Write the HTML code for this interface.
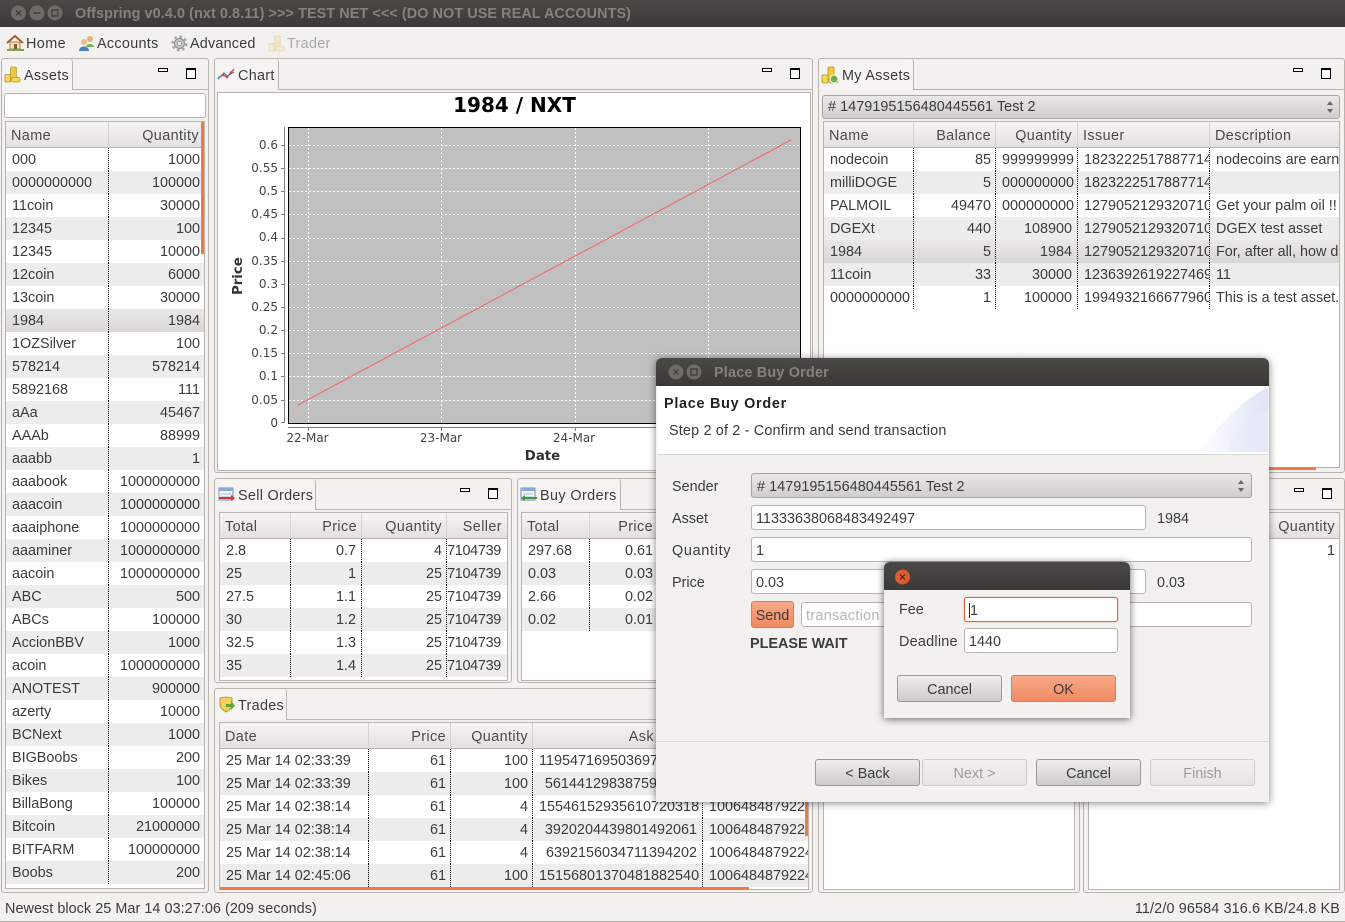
<!DOCTYPE html>
<html><head><meta charset="utf-8"><title>Offspring</title>
<style>
html,body{margin:0;padding:0}
body{position:relative;width:1345px;height:922px;overflow:hidden;background:#f2f1f0;font:14.4px "Liberation Sans",sans-serif;color:#3c3c3c}
div,span{box-sizing:border-box}
.a{position:absolute;white-space:nowrap}
.p{position:absolute;border:1px solid #b9b5ae;border-radius:3px;background:#f2f1f0}
.l{position:absolute;height:1px;background:#b9b5ae}
.tab{position:absolute;background:#f5f4f3;border-right:1px solid #b9b5ae;border-radius:3px 3px 0 0;height:31px;top:0}
.mn{position:absolute;width:10px;height:4px;border:1px solid #000;background:#fff}
.mx{position:absolute;width:10px;height:11px;border:1px solid #000;border-top-width:2px;background:#fff}
.f{position:absolute;border:1px solid #b9b5ae;background:#fff;overflow:hidden}
table{border-collapse:separate;border-spacing:0;table-layout:fixed;position:absolute;left:0;top:0;background:#fff}
th{box-sizing:border-box;height:26px;padding:2px 4px 0 5px;font-weight:normal;text-align:left;background:linear-gradient(#f6f5f4,#e3e1de);border-bottom:1px solid #b9b5ae;border-right:1px solid #d6d3ce;overflow:hidden;white-space:nowrap;color:#4a4a4a;letter-spacing:.4px}
td{height:23px;padding:0 4px 0 6px;overflow:hidden;white-space:nowrap;border-right:1px dotted #000}
td:last-child,th:last-child{border-right:none}
tr:nth-child(even) td{background:#ededed}
tr:nth-child(odd) td{background:#fff}
tr.s td{background:linear-gradient(#e9e8e6,#d9d8d5)}
tr td{line-height:22px}
tr th{line-height:22px}
.o{position:absolute;background:#f0794a}
.inp{position:absolute;background:#fff;border:1px solid #b9b5ae;border-radius:3px;height:25px;line-height:26px;padding-left:4px;white-space:nowrap;overflow:hidden}
.combo{position:absolute;border:1px solid #a9a69f;border-radius:3px;background:linear-gradient(#e9e8e6,#cfcecb);height:25px;line-height:26px;padding-left:5px;white-space:nowrap;letter-spacing:.05px}
.btn{position:absolute;border:1px solid #9c9992;border-radius:3px;background:linear-gradient(#eeedeb,#cdccc9);height:27px;width:105px;line-height:28px;text-align:center}
.dis{border-color:#cfccc6;background:linear-gradient(#f2f1f0,#e6e5e3);color:#9c9c9c}
.org{border-color:#c9835f;background:linear-gradient(#f9a888,#ef8a62)}
#as th:nth-child(2),#as td:nth-child(2){text-align:right}
#as th:nth-child(2){padding-right:5px}
#my th:nth-child(2),#my td:nth-child(2),#my th:nth-child(3),#my td:nth-child(3){text-align:right}
#my td:nth-child(3),#my th:nth-child(3){padding-right:5px}
#se th,#se td,#bu th,#bu td,#tr th,#tr td{text-align:right}
#se th:first-child,#se td:first-child,#bu th:first-child,#bu td:first-child,#tr th:first-child,#tr td:first-child,#tr td:last-child,#tr th:last-child{text-align:left}
#se td:last-child{padding-left:0;padding-right:6px;letter-spacing:-.3px}
#se th:last-child{padding-right:5px}
#se td:nth-child(2){padding-right:5px}
#tr td:nth-child(4){padding-right:5px}
#tr th:nth-child(4){padding-right:48px}
svg text{font-family:"DejaVu Sans",sans-serif}
</style></head><body>

<svg width="0" height="0" style="position:absolute"><defs>
<symbol id="coins" viewBox="0 0 18 18"><rect x="7" y="1" width="6" height="13" rx="1" fill="#f0c93c" stroke="#b8901c" stroke-width=".8"/><rect x="1" y="9" width="6" height="8" rx="1" fill="#f5d860" stroke="#b8901c" stroke-width=".8"/><rect x="8" y="12" width="9" height="5" rx="2" fill="#f5d860" stroke="#b8901c" stroke-width=".8"/></symbol>
<symbol id="tbl" viewBox="0 0 18 16"><rect x="1" y="1" width="14" height="12" fill="#f4f6fb" stroke="#6f8fc0"/><rect x="1" y="1" width="14" height="3" fill="#8aa8d8"/><path d="M3 7h10M3 10h10" stroke="#a9b9d6"/></symbol>
</defs></svg>

<!-- title bar -->
<div class="a" style="left:0;top:0;width:1345px;height:27px;background:linear-gradient(#4a4945,#3a3935)"></div>
<svg class="a" style="left:0;top:0" width="70" height="27"><circle cx="18.500" cy="13" r="7.500" fill="#6e6c67"/><circle cx="37" cy="13" r="7.500" fill="#6e6c67"/><circle cx="55" cy="13" r="7.500" fill="#6e6c67"/><path d="M16 10.500l5 5m0-5l-5 5" stroke="#3a3935" stroke-width="1.200"/><path d="M33.500 13h7" stroke="#3a3935" stroke-width="1.400"/><rect x="52" y="10" width="6" height="6" fill="none" stroke="#3a3935" stroke-width="1.200"/></svg>
<div class="a" style="left:75px;top:6px;font-weight:bold;font-size:14.4px;line-height:16px;color:#85827a;letter-spacing:.08px">Offspring v0.4.0 (nxt 0.8.11) &gt;&gt;&gt; TEST NET &lt;&lt;&lt; (DO NOT USE REAL ACCOUNTS)</div>

<!-- toolbar -->
<svg class="a" style="left:6px;top:34px" width="19" height="18" viewBox="0 0 19 18"><path d="M1 9L9 2l8 7" fill="none" stroke="#a5622a" stroke-width="2"/><rect x="4" y="8" width="10" height="7" fill="#f2e2c0" stroke="#a5622a" stroke-width=".8"/><rect x="8" y="10" width="3" height="5" fill="#8a5a2a"/><rect x="1" y="15" width="17" height="2" fill="#6fae4a"/></svg>
<div class="a" style="left:26px;top:36px;line-height:16px;letter-spacing:.4px">Home</div>
<svg class="a" style="left:78px;top:34px" width="18" height="18" viewBox="0 0 18 18"><circle cx="12" cy="5" r="3" fill="#e8b27a"/><path d="M8 13c0-4 8-4 8 0z" fill="#7db356"/><circle cx="6" cy="8" r="3" fill="#eebb88"/><path d="M1 17c0-6 10-6 10 0z" fill="#4d80c4"/></svg>
<div class="a" style="left:97px;top:36px;line-height:16px;letter-spacing:.3px">Accounts</div>
<svg class="a" style="left:171px;top:35px" width="17" height="17" viewBox="0 0 17 17"><circle cx="8.500" cy="8.500" r="5" fill="#c8c8c4" stroke="#8f8f8a"/><circle cx="8.500" cy="8.500" r="6.800" fill="none" stroke="#a5a5a0" stroke-width="2.500" stroke-dasharray="2.500 2.800"/><circle cx="8.500" cy="8.500" r="2.200" fill="#f2f1f0" stroke="#8f8f8a"/></svg>
<div class="a" style="left:190px;top:36px;line-height:16px;letter-spacing:.2px">Advanced</div>
<svg class="a" style="left:268px;top:35px;opacity:.25" width="17" height="17"><use href="#coins"/></svg>
<div class="a" style="left:287px;top:36px;line-height:16px;color:#a9a9a7;letter-spacing:.3px">Trader</div>

<!-- Assets panel -->
<div class="p" style="left:1px;top:58px;width:208px;height:835px"></div>
<div class="l" style="left:2px;top:89px;width:206px"></div>
<div class="tab" style="left:2px;top:59px;width:71px"></div>
<svg class="a" style="left:4px;top:66px" width="17" height="17"><use href="#coins"/></svg>
<div class="a" style="left:24px;top:68px;line-height:16px;letter-spacing:.3px">Assets</div>
<div class="mn" style="left:158px;top:68px"></div><div class="mx" style="left:186px;top:68px"></div>
<div class="inp" style="left:4px;top:93px;width:202px;height:25px"></div>
<div class="f" style="left:5px;top:121px;width:200px;height:768px">
<table id="as" style="width:198px"><col style="width:103px"><col style="width:95px">
<thead><tr><th>Name</th><th>Quantity</th></tr></thead><tbody>
<tr><td>000</td><td>1000</td></tr>
<tr><td>0000000000</td><td>100000</td></tr>
<tr><td>11coin</td><td>30000</td></tr>
<tr><td>12345</td><td>100</td></tr>
<tr><td>12345</td><td>10000</td></tr>
<tr><td>12coin</td><td>6000</td></tr>
<tr><td>13coin</td><td>30000</td></tr>
<tr class="s"><td>1984</td><td>1984</td></tr>
<tr><td>1OZSilver</td><td>100</td></tr>
<tr><td>578214</td><td>578214</td></tr>
<tr><td>5892168</td><td>111</td></tr>
<tr><td>aAa</td><td>45467</td></tr>
<tr><td>AAAb</td><td>88999</td></tr>
<tr><td>aaabb</td><td>1</td></tr>
<tr><td>aaabook</td><td>1000000000</td></tr>
<tr><td>aaacoin</td><td>1000000000</td></tr>
<tr><td>aaaiphone</td><td>1000000000</td></tr>
<tr><td>aaaminer</td><td>1000000000</td></tr>
<tr><td>aacoin</td><td>1000000000</td></tr>
<tr><td>ABC</td><td>500</td></tr>
<tr><td>ABCs</td><td>100000</td></tr>
<tr><td>AccionBBV</td><td>1000</td></tr>
<tr><td>acoin</td><td>1000000000</td></tr>
<tr><td>ANOTEST</td><td>900000</td></tr>
<tr><td>azerty</td><td>10000</td></tr>
<tr><td>BCNext</td><td>1000</td></tr>
<tr><td>BIGBoobs</td><td>200</td></tr>
<tr><td>Bikes</td><td>100</td></tr>
<tr><td>BillaBong</td><td>100000</td></tr>
<tr><td>Bitcoin</td><td>21000000</td></tr>
<tr><td>BITFARM</td><td>100000000</td></tr>
<tr><td>Boobs</td><td>200</td></tr>
</tbody></table></div>
<div class="o" style="left:201px;top:122px;width:3px;height:132px"></div>

<!-- Chart panel -->
<div class="p" style="left:214px;top:58px;width:599px;height:415px"></div>
<div class="l" style="left:215px;top:89px;width:597px"></div>
<div class="tab" style="left:215px;top:59px;width:64px"></div>
<svg class="a" style="left:217px;top:66px" width="18" height="16" viewBox="0 0 18 16"><path d="M1 12l5-3 4 2 7-8" fill="none" stroke="#d84444" stroke-width="1.300"/><path d="M1 13l6-6 3 3 7-4" fill="none" stroke="#4a78c0" stroke-width="1.200"/><circle cx="6" cy="9" r="1.300" fill="#d84444"/><circle cx="10" cy="11" r="1.300" fill="#d84444"/><circle cx="14" cy="6.500" r="1.300" fill="#d84444"/></svg>
<div class="a" style="left:238px;top:68px;line-height:16px;letter-spacing:.3px">Chart</div>
<div class="mn" style="left:762px;top:68px"></div><div class="mx" style="left:790px;top:68px"></div>
<div class="f" style="left:217px;top:92px;width:594px;height:379px"></div>
<svg class="a" style="left:0;top:0" width="1345" height="922">
<rect x="288.500" y="127.500" width="512" height="296" fill="#c0c0c0" stroke="#000"/>
<path d="M289 400.500H800M289 376.500H800M289 353.500H800M289 330.500H800M289 307.500H800M289 284.500H800M289 261.500H800M289 238.500H800M289 214.500H800M289 191.500H800M289 168.500H800M289 145.500H800M308.500 128V423M441.500 128V423M575.500 128V423M708.500 128V423" stroke="#fff" stroke-dasharray="2 2" fill="none"/>
<path d="M298 405L791 140" stroke="#f06a6a" stroke-width="1.100" fill="none"/>
<path d="M284.500 127V423M288 427.500H801M281 145.500h4M281 168.500h4M281 191.500h4M281 214.500h4M281 238.500h4M281 261.500h4M281 284.500h4M281 307.500h4M281 330.500h4M281 353.500h4M281 376.500h4M281 400.500h4M281 422.500h4M308.500 427v4M441.500 427v4M575.500 427v4" stroke="#808080" fill="none"/>
<text x="514.500" y="112" font-size="20" font-weight="bold" text-anchor="middle" fill="#000">1984 / NXT</text>
<g font-size="12" fill="#444" text-anchor="end">
<text x="278" y="149">0.6</text><text x="278" y="172">0.55</text><text x="278" y="195">0.5</text><text x="278" y="218">0.45</text><text x="278" y="241">0.4</text><text x="278" y="265">0.35</text><text x="278" y="288">0.3</text><text x="278" y="311">0.25</text><text x="278" y="334">0.2</text><text x="278" y="357">0.15</text><text x="278" y="380">0.1</text><text x="278" y="404">0.05</text><text x="278" y="427">0</text>
</g>
<g font-size="12" fill="#444" text-anchor="middle"><text x="307.500" y="442">22-Mar</text><text x="441" y="442">23-Mar</text><text x="574" y="442">24-Mar</text></g>
<text x="542.500" y="460" font-size="13.300" font-weight="bold" fill="#333" text-anchor="middle">Date</text>
<text transform="translate(242,295) rotate(-90)" font-size="13.300" font-weight="bold" fill="#333">Price</text>
</svg>

<!-- My Assets -->
<div class="p" style="left:818px;top:58px;width:527px;height:415px"></div>
<div class="l" style="left:819px;top:89px;width:525px"></div>
<div class="tab" style="left:819px;top:59px;width:95px"></div>
<svg class="a" style="left:821px;top:66px" width="18" height="18"><use href="#coins"/><circle cx="13" cy="13" r="4" fill="#6cae4a" stroke="#fff"/></svg>
<div class="a" style="left:842px;top:68px;line-height:16px;letter-spacing:.3px">My Assets</div>
<div class="mn" style="left:1293px;top:68px"></div><div class="mx" style="left:1321px;top:68px"></div>
<div class="combo" style="left:822px;top:95px;width:518px;height:24px;line-height:22px">&#35; 1479195156480445561 Test 2</div>
<svg class="a" style="left:1326px;top:100px" width="8" height="14"><path d="M4 1l3 4H1zM4 13L1 9h6z" fill="#666"/></svg>
<div class="f" style="left:823px;top:121px;width:517px;height:347px">
<table id="my" style="width:516px"><col style="width:90px"><col style="width:82px"><col style="width:82px"><col style="width:132px"><col style="width:130px">
<thead><tr><th>Name</th><th>Balance</th><th>Quantity</th><th>Issuer</th><th>Description</th></tr></thead><tbody>
<tr><td>nodecoin</td><td>85</td><td>999999999</td><td>18232225178877148</td><td>nodecoins are earned</td></tr>
<tr><td>milliDOGE</td><td>5</td><td>000000000</td><td>18232225178877148</td><td></td></tr>
<tr><td>PALMOIL</td><td>49470</td><td>000000000</td><td>12790521293207100</td><td>Get your palm oil !!</td></tr>
<tr><td>DGEXt</td><td>440</td><td>108900</td><td>12790521293207100</td><td>DGEX test asset</td></tr>
<tr class="s"><td>1984</td><td>5</td><td>1984</td><td>12790521293207100</td><td>For, after all, how do</td></tr>
<tr><td>11coin</td><td>33</td><td>30000</td><td>12363926192274690</td><td>11</td></tr>
<tr><td>0000000000</td><td>1</td><td>100000</td><td>19949321666779600</td><td>This is a test asset.</td></tr>
</tbody></table></div>
<div class="o" style="left:1268px;top:467px;width:48px;height:3px"></div>

<!-- Sell Orders -->
<div class="p" style="left:214px;top:478px;width:298px;height:205px"></div>
<div class="l" style="left:215px;top:509px;width:296px"></div>
<div class="tab" style="left:215px;top:479px;width:101px"></div>
<svg class="a" style="left:218px;top:487px" width="18" height="16"><use href="#tbl"/><path d="M1 11h12" stroke="#e03030" stroke-width="2"/><path d="M13 8l4 3-4 3z" fill="#e03030"/></svg>
<div class="a" style="left:238px;top:488px;line-height:16px;letter-spacing:.3px">Sell Orders</div>
<div class="mn" style="left:460px;top:488px"></div><div class="mx" style="left:488px;top:488px"></div>
<div class="f" style="left:219px;top:512px;width:289px;height:169px">
<table id="se" style="width:287px"><col style="width:71px"><col style="width:71px"><col style="width:85px"><col style="width:60px">
<thead><tr><th>Total</th><th>Price</th><th>Quantity</th><th>Seller</th></tr></thead><tbody>
<tr><td>2.8</td><td>0.7</td><td>4</td><td>7104739</td></tr>
<tr><td>25</td><td>1</td><td>25</td><td>7104739</td></tr>
<tr><td>27.5</td><td>1.1</td><td>25</td><td>7104739</td></tr>
<tr><td>30</td><td>1.2</td><td>25</td><td>7104739</td></tr>
<tr><td>32.5</td><td>1.3</td><td>25</td><td>7104739</td></tr>
<tr><td>35</td><td>1.4</td><td>25</td><td>7104739</td></tr>
</tbody></table></div>

<!-- Buy Orders -->
<div class="p" style="left:517px;top:478px;width:296px;height:205px"></div>
<div class="l" style="left:518px;top:509px;width:294px"></div>
<div class="tab" style="left:518px;top:479px;width:103px"></div>
<svg class="a" style="left:520px;top:487px" width="18" height="16"><use href="#tbl"/><path d="M5 11h12" stroke="#3c9a3c" stroke-width="2"/><path d="M5 8l-4 3 4 3z" fill="#3c9a3c"/></svg>
<div class="a" style="left:540px;top:488px;line-height:16px;letter-spacing:.4px">Buy Orders</div>
<div class="f" style="left:521px;top:512px;width:287px;height:169px">
<table id="bu" style="width:285px"><col style="width:68px"><col style="width:68px"><col style="width:85px"><col style="width:64px">
<thead><tr><th>Total</th><th>Price</th><th>Quantity</th><th>Buyer</th></tr></thead><tbody>
<tr><td>297.68</td><td>0.61</td><td></td><td></td></tr>
<tr><td>0.03</td><td>0.03</td><td></td><td></td></tr>
<tr><td>2.66</td><td>0.02</td><td></td><td></td></tr>
<tr><td>0.02</td><td>0.01</td><td></td><td></td></tr>
</tbody></table></div>

<!-- Trades -->
<div class="p" style="left:214px;top:688px;width:599px;height:205px"></div>
<div class="l" style="left:215px;top:719px;width:597px"></div>
<div class="tab" style="left:215px;top:689px;width:72px"></div>
<svg class="a" style="left:219px;top:696px" width="17" height="17" viewBox="0 0 17 17"><path d="M1 2l6-1 6 1v7c0 3-3 5-6 7-3-2-6-4-6-7z" fill="#f2d25c" stroke="#b89a30"/><path d="M7 8h5V5l4 4.500-4 4.500v-3H7z" fill="#5fa83c"/></svg>
<div class="a" style="left:238px;top:698px;line-height:16px;letter-spacing:.3px">Trades</div>
<div class="f" style="left:219px;top:722px;width:590px;height:168px">
<table id="tr" style="width:588px"><col style="width:149px"><col style="width:82px"><col style="width:82px"><col style="width:170px"><col style="width:105px">
<thead><tr><th>Date</th><th>Price</th><th>Quantity</th><th>Ask</th><th>Bid</th></tr></thead><tbody>
<tr><td>25 Mar 14 02:33:39</td><td>61</td><td>100</td><td>11954716950369700000</td><td>100648487922</td></tr>
<tr><td>25 Mar 14 02:33:39</td><td>61</td><td>100</td><td>5614412983875900000</td><td>100648487922</td></tr>
<tr><td>25 Mar 14 02:38:14</td><td>61</td><td>4</td><td>15546152935610720318</td><td>100648487922</td></tr>
<tr><td>25 Mar 14 02:38:14</td><td>61</td><td>4</td><td>3920204439801492061</td><td>100648487922</td></tr>
<tr><td>25 Mar 14 02:38:14</td><td>61</td><td>4</td><td>6392156034711394202</td><td>1006484879224</td></tr>
<tr><td>25 Mar 14 02:45:06</td><td>61</td><td>100</td><td>15156801370481882540</td><td>1006484879224</td></tr>
</tbody></table></div>
<div class="o" style="left:220px;top:887px;width:529px;height:3px"></div>
<div class="o" style="left:805px;top:770px;width:3px;height:66px"></div>

<!-- bottom right panels -->
<div class="p" style="left:818px;top:478px;width:262px;height:415px"></div>
<div class="f" style="left:823px;top:512px;width:252px;height:378px"></div>
<div class="p" style="left:1083px;top:478px;width:262px;height:415px"></div>
<div class="l" style="left:1084px;top:509px;width:260px"></div>
<div class="mn" style="left:1294px;top:488px"></div><div class="mx" style="left:1322px;top:488px"></div>
<div class="f" style="left:1088px;top:512px;width:252px;height:378px">
<table style="left:0;top:0;width:250px"><col style="width:176px"><col style="width:74px">
<thead><tr><th></th><th style="text-align:right">Quantity</th></tr></thead><tbody>
<tr><td></td><td style="text-align:right">1</td></tr></tbody></table></div>

<!-- status bar -->
<div class="a" style="left:5px;top:901px;line-height:16px;letter-spacing:.05px">Newest block 25 Mar 14 03:27:06 (209 seconds)</div>
<div class="a" style="right:5px;top:901px;line-height:16px;letter-spacing:.13px">11/2/0 96584 316.6 KB/24.8 KB</div>
<div class="a" style="left:0;top:921px;width:1345px;height:1px;background:#b9b5ae"></div>

<!-- Wizard dialog -->
<div class="a" style="left:656px;top:358px;width:613px;height:444px;background:#f2f1f0;border-radius:6px 6px 0 0;box-shadow:0 1px 8px rgba(0,0,0,.5)">
<div class="a" style="left:0;top:0;width:613px;height:28px;background:linear-gradient(#4a4945,#3a3935);border-radius:6px 6px 0 0"></div>
<svg class="a" style="left:0;top:0" width="60" height="28"><circle cx="20" cy="14" r="7.500" fill="#6e6c67"/><circle cx="38" cy="14" r="7.500" fill="#6e6c67"/><path d="M17.500 11.500l5 5m0-5l-5 5" stroke="#3a3935" stroke-width="1.200"/><rect x="35" y="11" width="6" height="6" fill="none" stroke="#3a3935" stroke-width="1.200"/></svg>
<div class="a" style="left:58px;top:7px;font-weight:bold;line-height:16px;color:#85827a;letter-spacing:.2px">Place Buy Order</div>
<div class="a" style="left:1px;top:28px;width:611px;height:69px;background:#fff;border-bottom:1px solid #d9d8d5;overflow:hidden">
<svg class="a" style="left:0;top:0" width="611" height="68"><defs><linearGradient id="wv" x1="0" x2="1" y1="0" y2="0"><stop offset="0" stop-color="#fff"/><stop offset="1" stop-color="#dfe5f7"/></linearGradient></defs><path d="M539 66C560 42 585 14 611 1V66Z" fill="url(#wv)"/><path d="M570 66C580 46 595 30 611 24V66Z" fill="#e8ecf9" opacity=".6"/></svg>
<div class="a" style="left:7px;top:10px;font-weight:bold;line-height:16px;color:#222;letter-spacing:.73px">Place Buy Order</div>
<div class="a" style="left:12px;top:37px;line-height:16px;letter-spacing:.17px">Step 2 of 2 - Confirm and send transaction</div>
</div>
<div class="a" style="left:16px;top:121px;line-height:16px">Sender</div>
<div class="combo" style="left:95px;top:115px;width:501px">&#35; 1479195156480445561 Test 2</div>
<svg class="a" style="left:581px;top:121px" width="8" height="14"><path d="M4 1l3 4H1zM4 13L1 9h6z" fill="#666"/></svg>
<div class="a" style="left:16px;top:153px;line-height:16px">Asset</div>
<div class="inp" style="left:95px;top:147px;width:395px">11333638068483492497</div>
<div class="a" style="left:501px;top:153px;line-height:16px">1984</div>
<div class="a" style="left:16px;top:185px;line-height:16px;letter-spacing:.7px">Quantity</div>
<div class="inp" style="left:95px;top:179px;width:501px">1</div>
<div class="a" style="left:16px;top:217px;line-height:16px">Price</div>
<div class="inp" style="left:95px;top:211px;width:395px">0.03</div>
<div class="a" style="left:501px;top:217px;line-height:16px">0.03</div>
<div class="btn org" style="left:95px;top:243px;width:43px;height:27px">Send</div>
<div class="inp" style="left:145px;top:244px;width:451px;color:#b5b5b5;letter-spacing:.3px">transaction</div>
<div class="a" style="left:94px;top:278px;font-weight:bold;line-height:16px">PLEASE WAIT</div>
<div class="a" style="left:0;top:383px;width:613px;height:1px;background:#d9d8d5"></div>
<div class="btn" style="left:159px;top:401px">&lt; Back</div>
<div class="btn dis" style="left:266px;top:401px">Next &gt;</div>
<div class="btn" style="left:380px;top:401px">Cancel</div>
<div class="btn dis" style="left:494px;top:401px">Finish</div>
</div>

<!-- Small dialog -->
<div class="a" style="left:884px;top:562px;width:246px;height:156px;background:#f2f1f0;border-radius:6px 6px 0 0;box-shadow:0 1px 8px rgba(0,0,0,.6)">
<div class="a" style="left:0;top:0;width:246px;height:28px;background:linear-gradient(#4a4945,#3a3935);border-radius:6px 6px 0 0"></div>
<svg class="a" style="left:10px;top:6px" width="18" height="18"><circle cx="8.500" cy="9" r="7.500" fill="#df5a2c"/><path d="M6 6.500l5 5m0-5l-5 5" stroke="#3a2a20" stroke-width="1.200"/></svg>
<div class="a" style="left:15px;top:40px;line-height:16px">Fee</div>
<div class="inp" style="left:80px;top:35px;width:154px;border-color:#e8633a;box-shadow:0 0 1px #e8633a">
<span style="display:inline-block;width:1px;height:15px;background:#222;vertical-align:-3px"></span>1</div>
<div class="a" style="left:15px;top:72px;line-height:16px;letter-spacing:.25px">Deadline</div>
<div class="inp" style="left:80px;top:66px;width:154px">1440</div>
<div class="btn" style="left:13px;top:113px">Cancel</div>
<div class="btn org" style="left:127px;top:113px">OK</div>
</div>

</body></html>
